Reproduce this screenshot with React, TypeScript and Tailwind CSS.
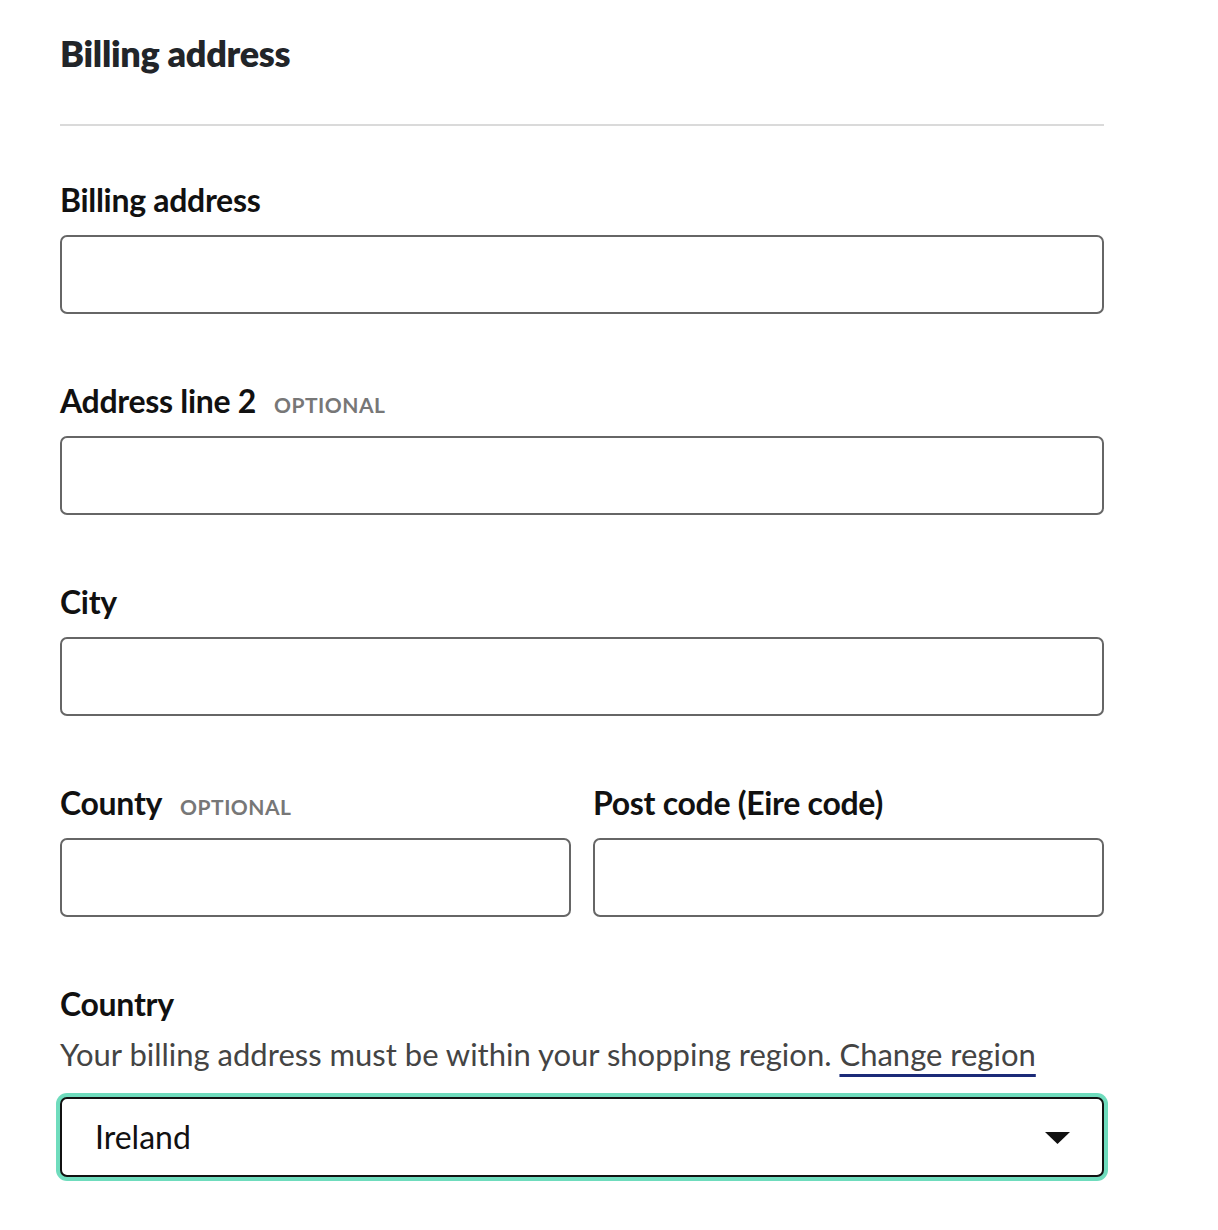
import { useState } from "react";

function Label({ text, optional }: { text: string; optional?: boolean }) {
  return (
    <div className="flex items-baseline gap-[18px] h-[40px] leading-[40px]">
      <span className="text-[32px] font-bold text-[#111] tracking-[-0.3px]">{text}</span>
      {optional && (
        <span className="text-[21px] font-bold text-[#777] tracking-[0.5px] uppercase">Optional</span>
      )}
    </div>
  );
}

function Field({ label, optional }: { label: string; optional?: boolean }) {
  return (
    <div className="flex flex-col">
      <Label text={label} optional={optional} />
      <input
        type="text"
        className="mt-[15px] h-[79px] w-full rounded-[7px] border-2 border-[#666] bg-white px-8 text-[30px] outline-none"
      />
    </div>
  );
}

export default function App() {
  const [country, setCountry] = useState("Ireland");

  return (
    <div className="min-h-screen bg-white" style={{ fontFamily: "Lato, 'Open Sans', sans-serif" }}>
      <div className="w-[1044px] ml-[60px] pt-[31px]">
        <h2 className="text-[36px] font-extrabold text-[#222529] leading-[44px] tracking-[-0.3px]">Billing address</h2>
        <div className="mt-[49px] h-[2px] bg-[#dadada]" />

        <div className="mt-[54px] flex flex-col gap-[67px]">
          <Field label="Billing address" />
          <Field label="Address line 2" optional />
          <Field label="City" />

          <div className="grid grid-cols-2 gap-[22px]">
            <Field label="County" optional />
            <Field label="Post code (Eire code)" />
          </div>

          <div className="flex flex-col">
            <Label text="Country" />
            <p className="mt-[10px] text-[31px] text-[#444] leading-[40px]">
              Your billing address must be within your shopping region.{" "}
              <a href="#" className="text-[#444] underline decoration-[#1b2a78] decoration-[3px] underline-offset-[8px]">
                Change region
              </a>
            </p>
            <div className="relative mt-[23px]">
              <select
                value={country}
                onChange={(e) => setCountry(e.target.value)}
                className="h-[80px] w-full appearance-none rounded-[7px] border-2 border-[#111] bg-white pl-[33px] text-[32px] text-[#111] outline-none shadow-[0_0_0_4px_#6fdcbd]"
              >
                <option>Ireland</option>
                <option>United Kingdom</option>
              </select>
              <svg className="pointer-events-none absolute right-[34px] top-[35px]" width="25" height="12" viewBox="0 0 25 12">
                <path d="M0 0 H25 L12.5 12 Z" fill="#111" />
              </svg>
            </div>
          </div>
        </div>
      </div>
    </div>
  );
}
